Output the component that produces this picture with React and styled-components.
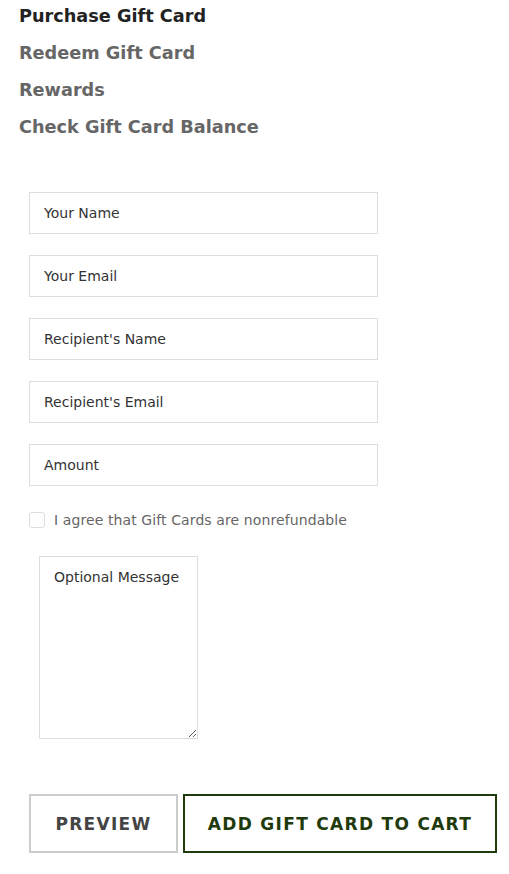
import React from 'react';
import styled, { createGlobalStyle } from 'styled-components';

const GlobalStyle = createGlobalStyle`
  body {
    margin: 0;
    background: #fff;
    font-family: "DejaVu Sans", Verdana, sans-serif;
  }
`;

const Page = styled.div`
  padding: 4px 0 20px 19px;
`;

const Nav = styled.nav`
  display: flex;
  flex-direction: column;
  gap: 15px;
`;

const NavLink = styled.a`
  display: block;
  height: 22px;
  line-height: 24px;
  font-size: 17.7px;
  font-weight: bold;
  color: ${(p) => (p.active ? '#222' : '#666')};
  text-decoration: none;
  cursor: pointer;
`;

const Form = styled.form`
  display: flex;
  flex-direction: column;
  align-items: flex-start;
  margin-top: 55px;
  padding-left: 10px;
`;

const Fields = styled.div`
  display: flex;
  flex-direction: column;
  gap: 21px;
`;

const Input = styled.input`
  box-sizing: border-box;
  width: 349px;
  height: 42px;
  padding: 0 14px;
  border: 1px solid #ddd;
  font-family: inherit;
  font-size: 14px;
  color: #333;
  outline: none;
  &::placeholder {
    color: #333;
    opacity: 1;
  }
`;

const AgreeRow = styled.label`
  display: flex;
  align-items: center;
  gap: 9px;
  margin-top: 26px;
  font-size: 14px;
  letter-spacing: 0.1px;
  color: #666;
  cursor: pointer;
`;

const Checkbox = styled.input`
  appearance: none;
  box-sizing: border-box;
  width: 16px;
  height: 16px;
  margin: 0;
  border: 1px solid #ddd;
  border-radius: 3px;
  background: #fff;
`;

const Message = styled.textarea`
  box-sizing: border-box;
  width: 159px;
  height: 183px;
  margin: 28px 0 0 10px;
  padding: 11px 14px;
  border: 1px solid #ddd;
  font-family: inherit;
  font-size: 14px;
  line-height: 18px;
  color: #333;
  outline: none;
  &::placeholder {
    color: #333;
    opacity: 1;
  }
`;

const Actions = styled.div`
  display: flex;
  gap: 5px;
  margin-top: 55px;
`;

const Button = styled.button`
  box-sizing: border-box;
  width: ${(p) => p.width}px;
  height: 59px;
  padding: 0;
  background: #fff;
  border: 2px solid ${(p) => (p.primary ? '#1f3a0b' : '#ccc')};
  color: ${(p) => (p.primary ? '#1f3a0b' : '#444')};
  font-family: inherit;
  font-size: 17px;
  font-weight: bold;
  letter-spacing: 1.3px;
  text-transform: uppercase;
  cursor: pointer;
`;

const App = () => {
  return (
    <Page>
      <GlobalStyle />
      <Nav>
        <NavLink active>Purchase Gift Card</NavLink>
        <NavLink>Redeem Gift Card</NavLink>
        <NavLink>Rewards</NavLink>
        <NavLink>Check Gift Card Balance</NavLink>
      </Nav>
      <Form onSubmit={(e) => e.preventDefault()}>
        <Fields>
          <Input placeholder="Your Name" />
          <Input placeholder="Your Email" />
          <Input placeholder="Recipient's Name" />
          <Input placeholder="Recipient's Email" />
          <Input placeholder="Amount" />
        </Fields>
        <AgreeRow>
          <Checkbox type="checkbox" />
          I agree that Gift Cards are nonrefundable
        </AgreeRow>
        <Message placeholder="Optional Message" />
        <Actions>
          <Button type="button" width={149}>Preview</Button>
          <Button type="submit" width={314} primary>Add Gift Card to Cart</Button>
        </Actions>
      </Form>
    </Page>
  );
};

export default App;
